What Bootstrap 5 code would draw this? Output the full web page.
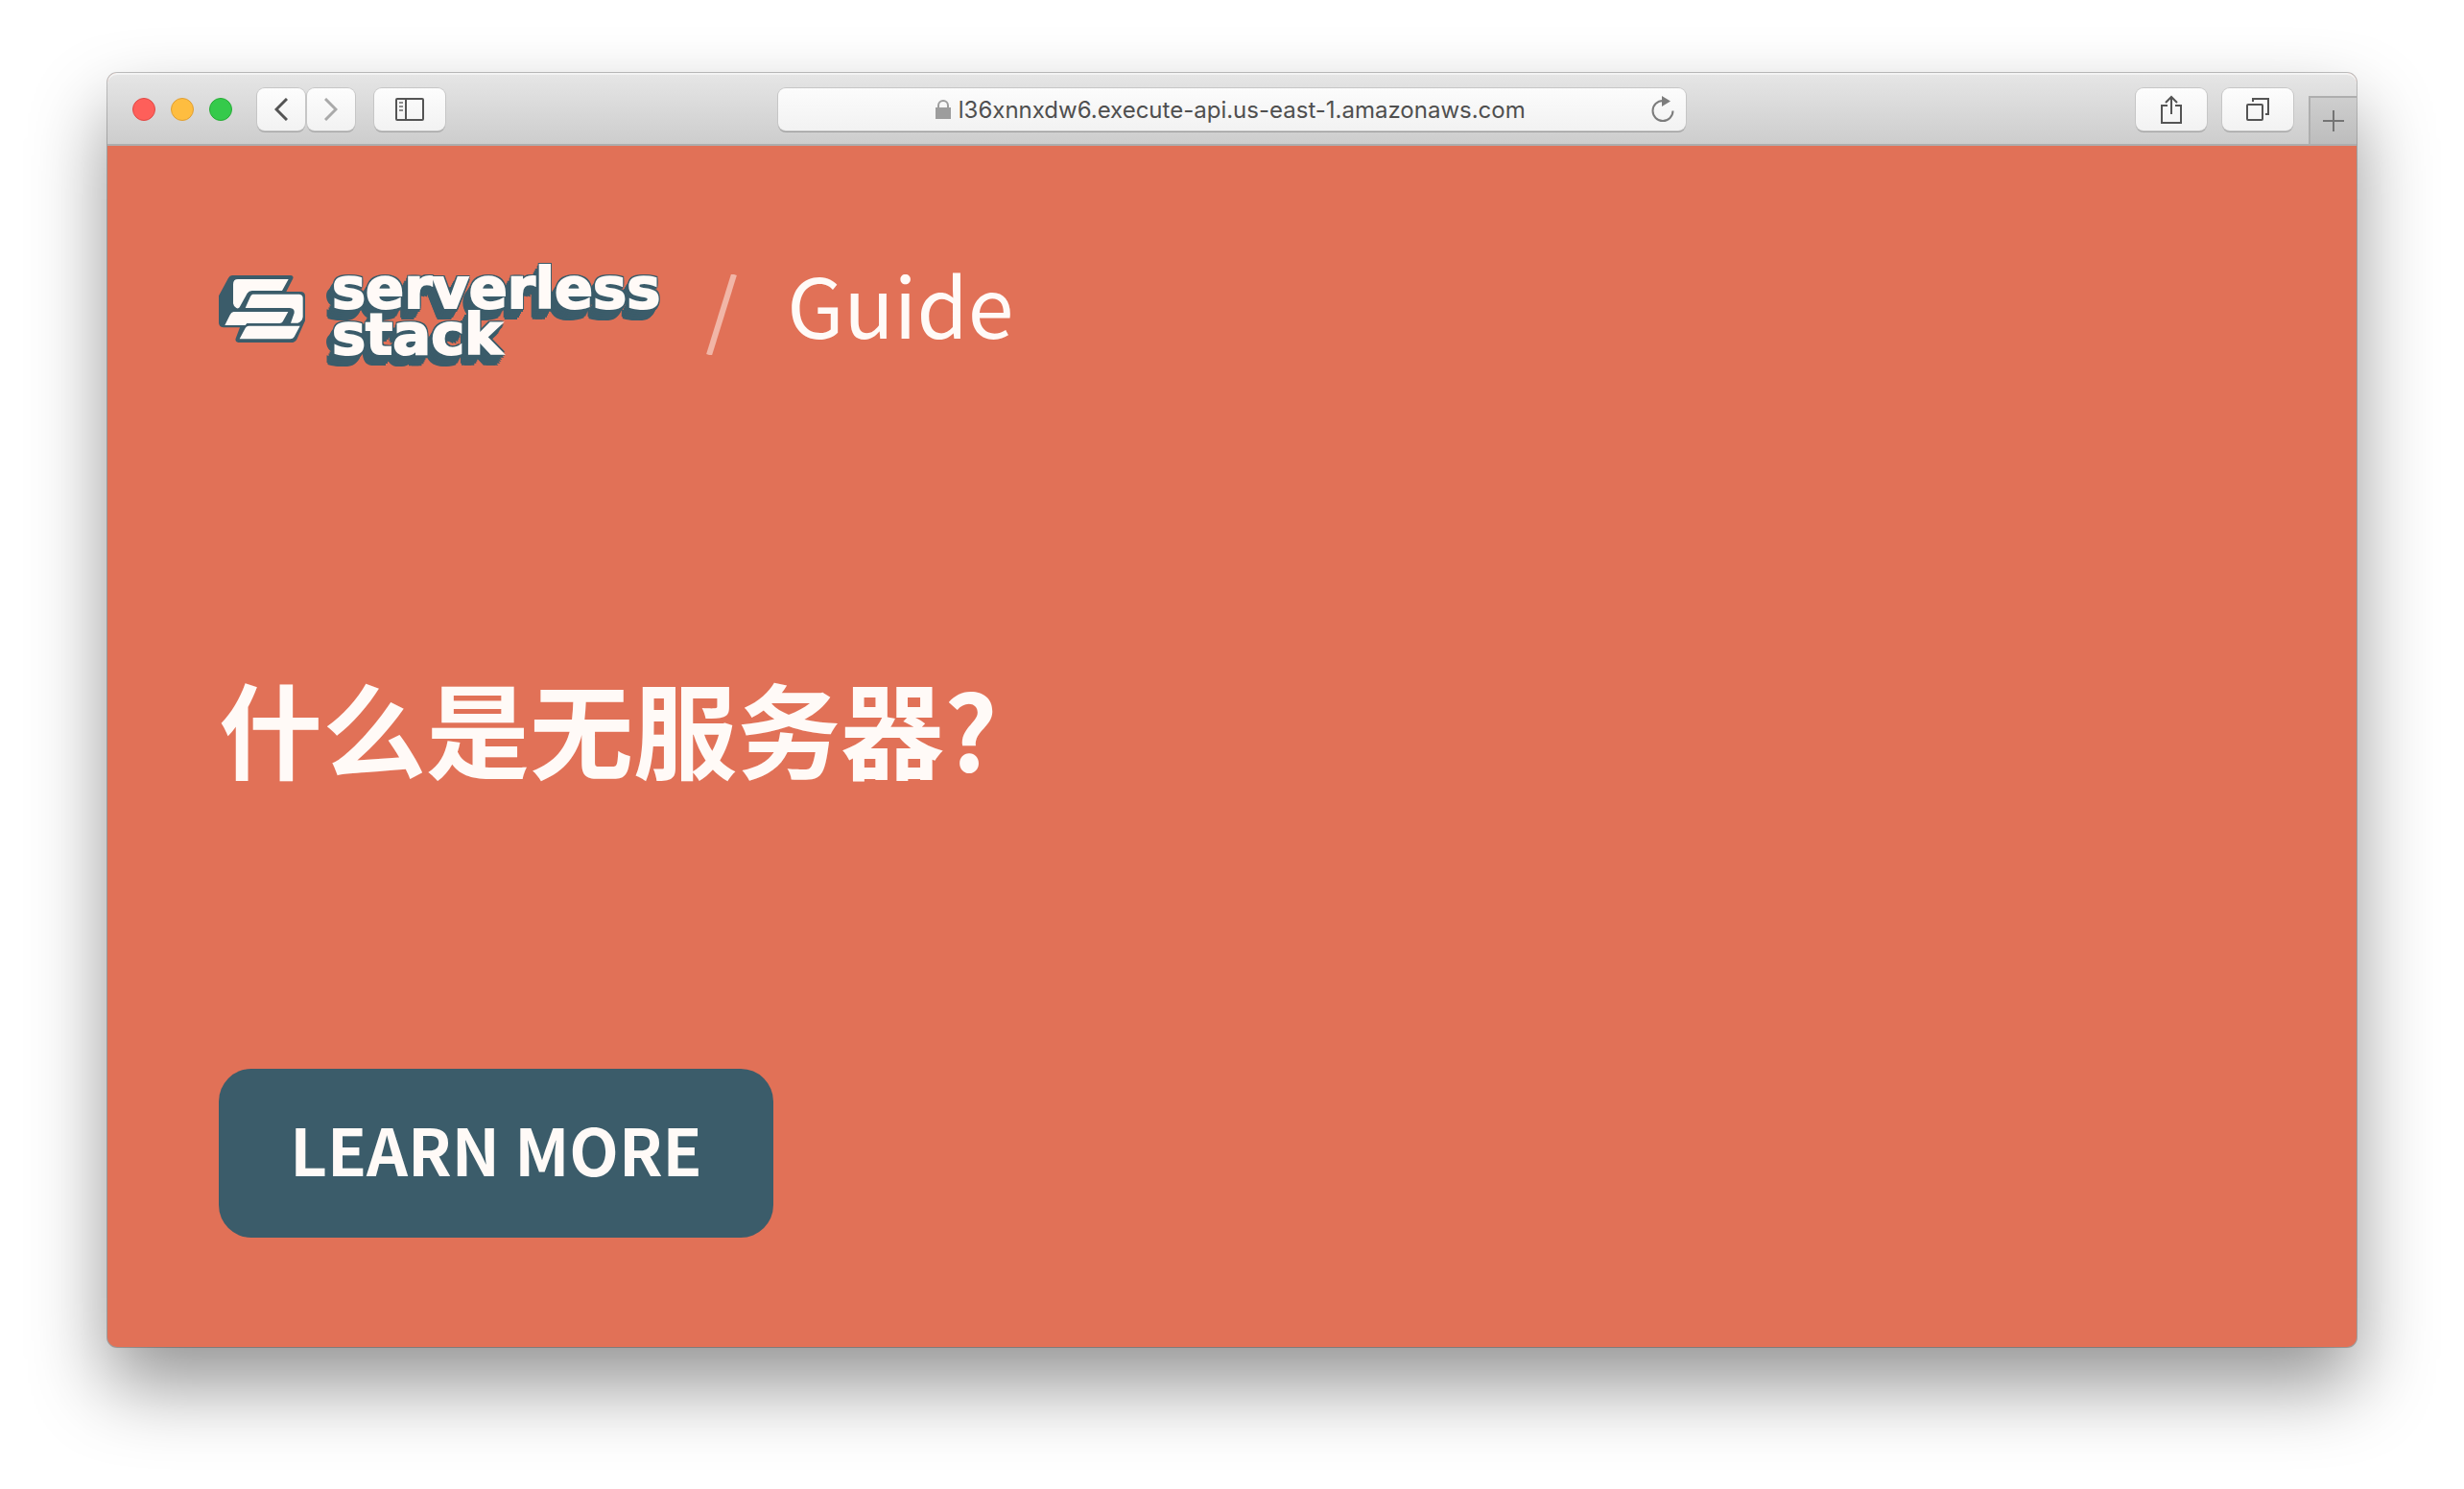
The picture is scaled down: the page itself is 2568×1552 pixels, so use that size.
<!DOCTYPE html>
<html lang="zh">
<head>
<meta charset="utf-8">
<meta name="viewport" content="width=device-width, initial-scale=1">
<title>Serverless Stack Guide</title>
<link href="https://cdn.jsdelivr.net/npm/bootstrap@5.3.0/dist/css/bootstrap.min.css" rel="stylesheet">
<style>
  :root { --coral: #e17157; --teal: #3b5c6a; --cream: #fffaf7; }
  body { background: #fff; font-family: "Noto Sans CJK SC", "Noto Sans", sans-serif; }
  .desk { padding: 76px 112px 148px; }
  .window { border-radius: 10px; background: var(--coral);
    box-shadow: 0 0 0 1px rgba(0,0,0,.24), 0 40px 80px rgba(0,0,0,.42); }
  .toolbar { height: 76px; padding-top: 2px; border-bottom: 2px solid #adadad; border-radius: 10px 10px 0 0;
    background: linear-gradient(#e6e6e6, #cdcdcd); box-shadow: inset 0 2px 0 #f3f3f3; }
  .lights { gap: 16px; padding-left: 26px; margin-right: 26px; }
  .light { width: 24px; height: 24px; border: 1px solid; border-radius: 50%; }
  .light-close { background: #fe5f5a; border-color: #e04845; }
  .light-min { background: #febd40; border-color: #e09f34; }
  .light-zoom { background: #35ca4b; border-color: #27ac36; }
  .history { gap: 2px; margin-right: 20px; }
  .tool { height: 44px; width: 74px; border: 0; border-radius: 8px; color: #545454;
    background: linear-gradient(#fdfdfd, #f2f2f2); box-shadow: 0 0 0 1px #c6c6c6, 0 2px 0 #a6a6a6; }
  .tool-half { width: 50px; }
  .address { width: 40.4%; height: 44px; border-radius: 8px; color: #7c7c7c;
    background: linear-gradient(#fcfcfc, #f2f2f2); box-shadow: 0 0 0 1px #c6c6c6, 0 2px 0 #9e9e9e; }
  .url { width: 592px; border: 0; padding: 2px 0 0; background: none; outline: 0; color: #4f4f4f;
    font: 24px/32px Inter, sans-serif; }
  .newtab { width: 50px; height: 50px; border: solid #aeaeae; border-width: 2px 0 0 2px; color: #747474;
    background: linear-gradient(#cecece, #bdbdbd); }
  .page-body { padding: 112px 116px 114px; color: var(--cream); }
  .brand { gap: 28px; }
  .wordmark { font: bold 59px/48px "DejaVu Sans", sans-serif; padding-top: 6px; color: var(--cream);
    -webkit-text-stroke: 2px var(--cream);
    text-shadow: 2px 0 var(--teal), 0 -2px var(--teal), 2px -2px var(--teal), -2px -2px var(--teal), 2px 2px var(--teal),
      -2px 0 var(--teal), -2px 2px var(--teal), 0 2px var(--teal), 1px 4px var(--teal), -3px 1px var(--teal),
      -3px 4px var(--teal), -1px 6px var(--teal), -5px 4px var(--teal), -4px 6px var(--teal), -2px 8px var(--teal),
      -6px 6px var(--teal), -5px 8px var(--teal), -3px 10px var(--teal), -7px 8px var(--teal),
      -6px 10px var(--teal), -9px 10px var(--teal), -8px 12px var(--teal), -5px 12px var(--teal); }
  .divider { margin: 12px 52px 0 48px; }
  .section-name { font-size: 86px; line-height: 104px; padding-bottom: 12px; }
  .headline { font-size: 108px; line-height: 140px; font-weight: 700; padding-top: 20px; }
  .learn { width: 578px; height: 176px; border-radius: 34px; background: var(--teal); color: var(--cream);
    padding: 0 0 10px; font-size: 67px; font-weight: 700; }
  .learn:hover { background: #34505d; color: var(--cream); }
</style>
<script src="https://cdn.jsdelivr.net/npm/bootstrap@5.3.0/dist/js/bootstrap.bundle.min.js"></script>
</head>
<body>
<div class="desk min-vh-100 d-flex flex-column">
  <div class="window flex-grow-1 d-flex flex-column">
    <header class="toolbar d-flex align-items-center">
      <div class="d-flex align-items-center flex-fill w-25">
        <div class="lights d-flex">
          <span class="light light-close"></span><span class="light light-min"></span><span class="light light-zoom"></span>
        </div>
        <div class="history d-flex">
          <button class="tool tool-half d-flex align-items-center justify-content-center p-0" aria-label="Back">
            <svg width="14" height="24" viewBox="0 0 14 24" fill="none" stroke="currentColor" stroke-width="3"><path d="M13 1 2 12 13 23"/></svg>
          </button>
          <button class="tool tool-half d-flex align-items-center justify-content-center p-0" aria-label="Forward">
            <svg width="14" height="24" viewBox="0 0 14 24" fill="none" stroke="#a9a9a9" stroke-width="3"><path d="M1 1 12 12 1 23"/></svg>
          </button>
        </div>
        <button class="tool d-flex align-items-center justify-content-center p-0" aria-label="Sidebar">
          <svg width="30" height="24" viewBox="0 0 30 24" fill="none" stroke="currentColor" stroke-width="2"><rect x="1" y="1" width="28" height="22" rx="1"/><path d="M11 1V23"/><path stroke="#8c8c8c" d="M4 5H8M4 9H8M4 13H8"/></svg>
        </button>
      </div>
      <div class="address d-flex align-items-center">
        <div class="flex-fill w-25"></div>
        <svg width="16" height="20" viewBox="0 0 16 20" class="me-2 flex-shrink-0" fill="#9d9d9d"><path d="M0 8H16V20H0Z"/><path d="M3 9V6a5 5 0 0 1 10 0V9" fill="none" stroke="#9d9d9d" stroke-width="2"/></svg>
        <input class="url flex-shrink-0" type="text" aria-label="Address" value="l36xnnxdw6.execute-api.us-east-1.amazonaws.com">
        <div class="flex-fill w-25 d-flex justify-content-end pe-2">
          <button class="btn d-flex p-0 border-0 me-1" aria-label="Reload">
            <svg width="24" height="28" viewBox="0 0 24 28" fill="none" stroke="#7c7c7c" stroke-width="2"><path d="M12 5a10.500 10.500 0 1 0 10.500 10.500"/><path d="M11 0 20 5.500 11 11Z" fill="#7c7c7c" stroke="none"/></svg>
          </button>
        </div>
      </div>
      <div class="d-flex align-items-center justify-content-end flex-fill w-25 align-self-stretch">
        <button class="tool d-flex align-items-center justify-content-center p-0 me-3" aria-label="Share">
          <svg width="22" height="30" viewBox="0 0 22 30" fill="none" stroke="currentColor" stroke-width="2"><path d="M7 11H1V29H21V11H15M11 20V2M5 8 11 2 17 8"/></svg>
        </button>
        <button class="tool d-flex align-items-center justify-content-center p-0 me-3" aria-label="Tabs">
          <svg width="24" height="24" viewBox="0 0 24 24" fill="none" stroke="currentColor" stroke-width="2"><rect x="1" y="7" width="16" height="16" rx="1"/><path d="M7 4V1H23V17H20"/></svg>
        </button>
        <button class="newtab align-self-end d-flex align-items-center justify-content-center p-0" aria-label="New tab">
          <svg width="22" height="22" viewBox="0 0 22 22" stroke="currentColor" stroke-width="2"><path d="M11 0V22M0 11H22"/></svg>
        </button>
      </div>
    </header>
    <main class="page-body flex-grow-1 d-flex flex-column justify-content-between align-items-start">
      <div class="d-flex align-items-center">
        <div class="brand d-flex align-items-center">
          <svg width="90" height="70" viewBox="54 78 270 210" role="img" aria-label="Logo">
            <path fill="#3b5c6a" d="M96 78H280Q290 80 285 90L265 129H312Q324 131 324 143V220L298 278Q292 288 280 288H115Q104 286 107 275L120 241H68Q54 240 54 226V142L84 86Q88 78 96 78Z"/>
            <g fill="#fffaf7"><path d="M114 90H272L252 126H158Q148 127 143 134L119 178Q115 183 109 180Q100 175 99 166V106Q99 90 114 90Z"/>
            <path d="M160 137H306Q317 138 317 149V208Q315 223 301 227H279L290 196Q292 181 276 180H137L152 146Q155 138 160 137Z"/>
            <path d="M100 192H271L254 223Q251 228 244 228H142L137 234H73L89 202Q93 193 100 192Z"/>
            <path d="M147 236H308L290 270Q286 277 278 277H119L137 243Q140 237 147 236Z"/></g>
          </svg>
          <div class="wordmark"><div>serverless</div><div>stack</div></div>
        </div>
        <svg class="divider" width="32" height="84" viewBox="0 0 32 84" aria-hidden="true"><path d="M29 0 3 84" stroke="#f1b6a7" stroke-width="6"/></svg>
        <div class="section-name">Guide</div>
      </div>
      <h1 class="headline m-0">什么是无服务器?</h1>
      <button class="btn learn">LEARN MORE</button>
    </main>
  </div>
</div>
</body>
</html>
